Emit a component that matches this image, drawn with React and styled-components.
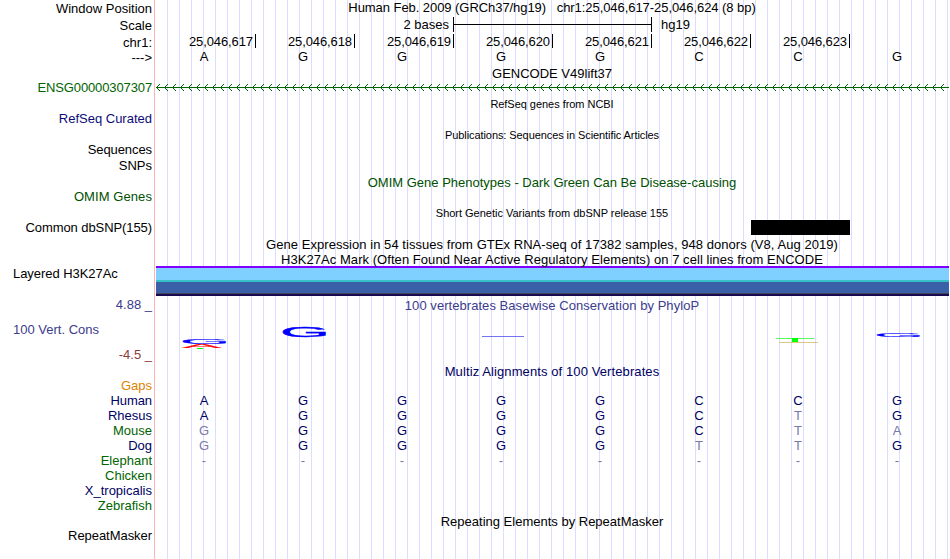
import React from 'react';
import styled, { createGlobalStyle } from 'styled-components';

const GlobalStyle = createGlobalStyle`
  body {
    margin: 0;
    background: #fff;
    overflow: hidden;
  }
`;

const Browser = styled.div`
  display: flex;
  width: 949px;
  height: 559px;
  overflow: hidden;
  font-family: 'Liberation Sans', Arial, sans-serif;
  font-size: 13px;
  line-height: 15px;
  color: #000;
  white-space: pre;
`;

const Labels = styled.div`
  width: 154px;
  box-sizing: border-box;
  padding: 1px 2px 0 0;
`;

const Label = styled.div`
  height: 15px;
  margin-top: ${(p) => p.$gap || 0}px;
  padding-left: 13px;
  text-align: ${(p) => (p.$left ? 'left' : 'right')};
  color: ${(p) => p.$color || '#000'};
  letter-spacing: ${(p) => p.$track || 0}px;
`;

const Tracks = styled.div`
  flex: 1;
  border-left: 1px solid #ffb4b4;
  background: repeating-linear-gradient(to right, transparent 0 11px, #dcdcff 11px 12px) 1px 0;
`;

const Row = styled.div`
  height: ${(p) => p.$h}px;
`;

const Title = styled(Row)`
  text-align: center;
  color: ${(p) => p.$color || '#000'};
  font-size: ${(p) => (p.$small ? 11 : 13)}px;
  letter-spacing: ${(p) => p.$track || 0}px;
`;

const Cells = styled(Row)`
  display: grid;
  grid-template-columns: repeat(8, 99px);
  padding-left: 2px;
`;

const Tick = styled.div`
  height: 14px;
  box-sizing: border-box;
  padding-right: 2px;
  border-right: 1px solid #000;
  text-align: right;
  letter-spacing: -0.1px;
`;

const Base = styled.div`
  padding-right: 5px;
  text-align: center;
  color: ${(p) => p.$color || '#000'};
`;

const ScaleRow = styled(Row)`
  display: flex;
  padding-left: 2px;
`;

const ScaleText = styled.div`
  width: ${(p) => p.$w}px;
  text-align: right;
`;

const ScaleBar = styled.div`
  width: 197px;
  height: 15px;
  margin: 0 9px 0 4px;
  border: solid #000;
  border-width: 0 1px;
  background: linear-gradient(#000, #000) 0 7px / 100% 1px no-repeat;
`;

const Variant = styled.div`
  grid-column: 7;
  height: 15px;
  background: #000;
`;

const Signal = styled(Row)`
  margin: 0 0 2px 1px;
  background: linear-gradient(
    #8000ff 0 2px,
    #80d0ff 2px 14px,
    #38c0c8 14px 16px,
    #3a60a8 16px 27px,
    #404858 27px 28px,
    #180850 28px 30px
  );
`;

const Drawing = styled.svg`
  display: block;
  width: 794px;
  height: ${(p) => p.$h}px;
`;

const NAVY = '#000064';
const GREEN = '#006400';
const PHYLOP = '#3c3c8c';
const FADED = '#7878aa';

const labels = [
  { text: 'Window Position' },
  { text: 'Scale', gap: 2 },
  { text: 'chr1:', gap: 2 },
  { text: '--->' },
  { text: 'ENSG00000307307', gap: 15, color: GREEN, track: -0.12 },
  { text: 'RefSeq Curated', gap: 16, color: '#0c0c78' },
  { text: 'Sequences', gap: 16, track: -0.08 },
  { text: 'SNPs', gap: 1 },
  { text: 'OMIM Genes', gap: 16, color: '#005000', track: 0.08 },
  { text: 'Common dbSNP(155)', gap: 16, track: -0.08 },
  { text: 'Layered H3K27Ac', gap: 31, left: true, track: -0.05 },
  { text: '4.88 _', gap: 16, color: PHYLOP },
  { text: '100 Vert. Cons', gap: 10, left: true, color: PHYLOP },
  { text: '-4.5 _', gap: 10, color: '#8c3c3c' },
  { text: 'Gaps', gap: 16, color: '#e08200' },
  { text: 'Human', color: NAVY, track: -0.1 },
  { text: 'Rhesus', color: NAVY },
  { text: 'Mouse', color: GREEN },
  { text: 'Dog', color: NAVY },
  { text: 'Elephant', color: GREEN },
  { text: 'Chicken', color: GREEN },
  { text: 'X_tropicalis', color: NAVY },
  { text: 'Zebrafish', color: GREEN },
  { text: 'RepeatMasker', gap: 15, track: -0.05 },
];

const positions = [617, 618, 619, 620, 621, 622, 623];

// lower case marks a base that differs from the human one
const alignments = ['AGGGGCCG', 'AGGGGCtG', 'gGGGGCta', 'gGGGGttG', '--------'];

const Bases = ({ seq, h, color }) => (
  <Cells $h={h}>
    {seq.split('').map((b, i) => (
      <Base key={i} $color={b === b.toUpperCase() && b !== '-' ? color : FADED}>
        {b.toUpperCase()}
      </Base>
    ))}
  </Cells>
);

const Intron = () => (
  <Drawing $h={15} viewBox="155 80 794 15" shapeRendering="crispEdges">
    <path d="M156 87.5H949" stroke={GREEN} />
    {Array.from({ length: 100 }, (_, i) => (
      <path
        key={i}
        transform={`translate(${156 + i * 8} 84)`}
        d="M0 3h1v1h-1zM1 2h1v1h-1zM2 1h1v1h-1zM3 0h1v1h-1zM1 4h1v1h-1zM2 5h1v1h-1zM3 6h1v1h-1z"
        fill={GREEN}
      />
    ))}
  </Drawing>
);

// one letter of the sequence logo, stretched to the given box
const LogoLetter = ({ x, bottom, sx, sy, fill, children }) => (
  <text
    transform={`translate(${x} ${bottom}) scale(${sx} ${sy})`}
    fontSize="20"
    stroke={fill}
    strokeWidth="0.4"
    fill={fill}
  >
    {children}
  </text>
);

const Logo = () => (
  <Drawing $h={46} viewBox="155 318 794 46">
    <LogoLetter x={180} bottom={344} sx={3.2} sy={0.4} fill="#00f">G</LogoLetter>
    <LogoLetter x={182} bottom={348} sx={2.95} sy={0.26} fill="#f00">A</LogoLetter>
    <path d="M197 348.5H203" stroke="#0f0" />
    <LogoLetter x={280} bottom={336.7} sx={3.2} sy={0.72} fill="#00f">G</LogoLetter>
    <path d="M482 336.5H524" stroke="#4646f0" opacity="0.75" />
    <path d="M776 338.5H814" stroke="#5f5" />
    <path d="M792 338H798V342H792z" fill="#0f0" />
    <path d="M779 342.5H818" stroke="#c8b450" opacity="0.7" />
    <LogoLetter x={874} bottom={336.8} sx={3.2} sy={0.25} fill="#00f">G</LogoLetter>
  </Drawing>
);

const App = () => (
  <>
    <GlobalStyle />
    <Browser>
      <Labels>
        {labels.map((l) => (
          <Label key={l.text} $gap={l.gap} $color={l.color} $left={l.left} $track={l.track}>
            {l.text}
          </Label>
        ))}
      </Labels>
      <Tracks>
        <Title $h={17} $track={-0.06}>Human Feb. 2009 (GRCh37/hg19)   chr1:25,046,617-25,046,624 (8 bp)</Title>
        <ScaleRow $h={17}>
          <ScaleText $w={292}>2 bases</ScaleText>
          <ScaleBar />
          <span>hg19</span>
        </ScaleRow>
        <Cells $h={15}>
          {positions.map((p) => (
            <Tick key={p}>25,046,{p}</Tick>
          ))}
        </Cells>
        <Bases seq="AGGGGCCG" h={17} color="#000" />
        <Title $h={14}>GENCODE V49lift37</Title>
        <Row $h={17}>
          <Intron />
        </Row>
        <Title $h={31} $small $track={-0.04}>RefSeq genes from NCBI</Title>
        <Title $h={47} $small $track={-0.08}>Publications: Sequences in Scientific Articles</Title>
        <Title $h={31} $color="#005000">OMIM Gene Phenotypes - Dark Green Can Be Disease-causing</Title>
        <Title $h={14} $small $track={-0.02}>Short Genetic Variants from dbSNP release 155</Title>
        <Cells $h={17}>
          <Variant />
        </Cells>
        <Title $h={15} $track={0.05}>Gene Expression in 54 tissues from GTEx RNA-seq of 17382 samples, 948 donors (V8, Aug 2019)</Title>
        <Title $h={14} $track={0.05}>H3K27Ac Mark (Often Found Near Active Regulatory Elements) on 7 cell lines from ENCODE</Title>
        <Signal $h={30} />
        <Title $h={20} $color={PHYLOP} $track={0.05}>100 vertebrates Basewise Conservation by PhyloP</Title>
        <Logo />
        <Title $h={29} $color={NAVY} $track={0.1}>Multiz Alignments of 100 Vertebrates</Title>
        {alignments.map((seq) => (
          <Bases key={seq} seq={seq} h={15} color={NAVY} />
        ))}
        {/* Chicken, X_tropicalis and Zebrafish have no aligned bases here */}
        <Row $h={46} />
        <Title $h={15}>Repeating Elements by RepeatMasker</Title>
      </Tracks>
    </Browser>
  </>
);

export default App;
